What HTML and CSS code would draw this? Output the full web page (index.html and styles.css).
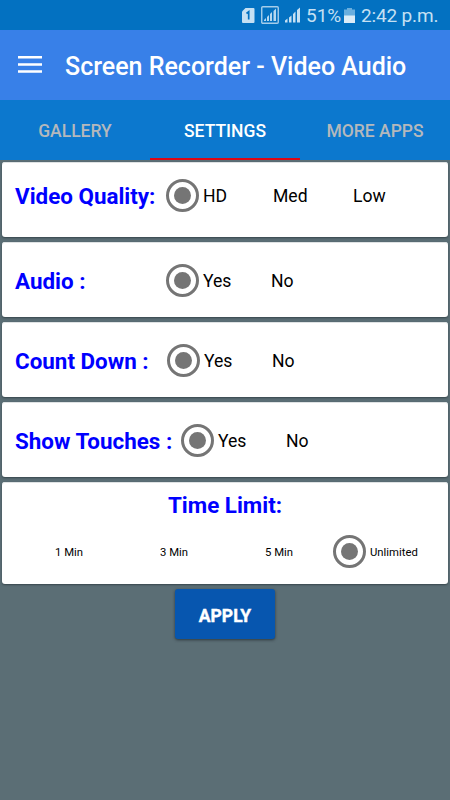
FILE: index.html
```html
<!DOCTYPE html>
<html lang="en"><head><meta charset="utf-8"><title>Screen Recorder</title><link rel="stylesheet" href="styles.css"></head>
<body>
<div class="status">
<svg class="sim" width="13" height="15" viewBox="0 0 13 15"><path d="M3.500 0H11.500a1 1 0 0 1 1 1V14a1 1 0 0 1-1 1H1a1 1 0 0 1-1-1V3.500z" fill="#c5e0f3"/><path d="M4.500 5.500l2.200-1.700V11.500" fill="none" stroke="#0371c1" stroke-width="1.700"/></svg>
<svg class="sig1" width="18" height="18" viewBox="0 0 18 18"><rect x=".75" y=".75" width="16.500" height="16.500" rx="1" fill="none" stroke="#a5cdea" stroke-width="1.400"/><path d="M3 15v-1l2-2v3zM6 15v-4l2-2v6zM9 15V8l2-2v9zM12.500 15V5l2.500-2.500V15z" fill="#b5d7ef"/></svg>
<svg class="sig2" width="16" height="16" viewBox="0 0 16 16"><path d="M0 15.500v-2l2.500-2v4zM4 15.500V10.500l2.500-2v7zM8 15.500V7l2.500-2.500v11zM12 15.500V3L15 .5v15z" fill="#c5e0f3"/></svg>
<span class="pct">51%</span>
<svg class="bat" width="11" height="15" viewBox="0 0 11 15"><path d="M3 0h5v1.500h3V15H0V1.500h3z" fill="#69aede"/><path d="M0 7.500h11V15H0z" fill="#dcecf7"/></svg>
<span class="time">2:42 p.m.</span>
</div>
<header class="bar"><svg width="24" height="17" viewBox="0 0 24 17"><path d="M0 1.300h24M0 8.500h24M0 15.500h24" stroke="#fff" stroke-width="2.600"/></svg><h1>Screen Recorder - Video Audio</h1></header>
<nav class="tabs"><span>GALLERY</span><span class="active">SETTINGS</span><span>MORE APPS</span></nav>
<main>
<section class="card row quality"><b>Video Quality:</b><i class="radio"></i><span class="first">HD</span><span class="second">Med</span><span class="third">Low</span></section>
<section class="card row audio"><b>Audio :</b><i class="radio"></i><span class="first">Yes</span><span class="second">No</span></section>
<section class="card row count"><b>Count Down :</b><i class="radio"></i><span class="first">Yes</span><span class="second">No</span></section>
<section class="card row touches"><b>Show Touches :</b><i class="radio"></i><span class="first">Yes</span><span class="second">No</span></section>
<section class="card limit"><b>Time Limit:</b><div class="options"><span>1 Min</span><span>3 Min</span><span>5 Min</span><i class="radio"></i><span>Unlimited</span></div></section>
<button>APPLY</button>
</main>
</body></html>
```
FILE: styles.css
```css
*{box-sizing:border-box}
body{margin:0;height:800px;background:#5b6e75;font-family:Roboto,sans-serif;color:#000;overflow:hidden}
.status{height:30px;background:#0371c1;display:flex;align-items:center;color:#c5e0f3;font-size:19px;padding-left:242px;white-space:nowrap}
.status svg{flex:none}
.sig1{margin-left:6px}.sig2{margin-left:6px}.pct{margin-left:5px;width:36px}.bat{margin-left:2px;margin-top:1px}.time{margin-left:6px;letter-spacing:-.15px}
.bar{height:70px;background:#3880e8;display:flex;align-items:center;padding:2px 0 0 18px}
.bar svg{margin-top:-3px}
.bar h1{margin:0 0 0 23px;color:#fff;font-size:25px;font-weight:500;white-space:nowrap}
.tabs{height:60px;background:#0c78ce;display:grid;grid-template-columns:repeat(3,1fr);color:#b5b8bc;font-size:17.500px;font-weight:500}
.tabs span{display:flex;align-items:center;justify-content:center;padding-top:4px;border-bottom:2px solid transparent}
.tabs .active{color:#fff;border-color:#dc0714}
main{padding:2px 2px;display:flex;flex-direction:column;gap:5px}
.card{height:75px;background:#fff;border-radius:3px;box-shadow:0 1px 2px #37464c,inset 0 1px #dfe3e4}
.card b{color:#00f;font-size:22.400px;font-weight:700;white-space:nowrap}
.row{display:flex;align-items:center;padding:1px 0 0 13px;font-size:17.600px}
.row b,.row span{padding-top:2px}
.quality{padding-bottom:10px}
.row b{width:151px;flex:none}
.count b{width:152px}.touches b{width:166px}
.radio{width:33px;height:33px;flex:none;border:3px solid #757575;border-radius:50%;display:flex;align-items:center;justify-content:center}
.radio:after{content:"";width:17px;height:17px;border-radius:50%;background:#757575}
.first{width:68px;margin-left:4px}.quality .first{width:70px}.second{width:80px}
.limit{height:102px;text-align:center;padding-top:10px}
.limit b{display:block;line-height:27px}
.options{display:flex;align-items:center;margin-top:16px;padding-left:53px;font-size:11.300px;text-align:left}
.options span{width:105px;padding-top:2px}.options span:nth-child(3){width:68px}.options span:last-child{margin-left:4px;width:auto}
button{width:100px;height:50px;align-self:center;border:0;border-radius:3px;background:#0756af;color:#fff;font:700 17.500px Roboto,sans-serif;padding:3px 0 0;-webkit-text-stroke:.4px #fff;box-shadow:0 1px 3px #2c383d}
```
